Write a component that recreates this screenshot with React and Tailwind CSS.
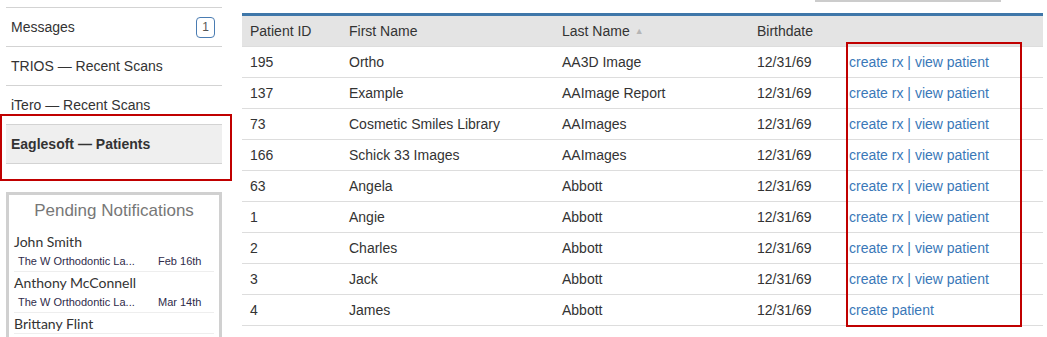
import React from "react";

const navItems = [
  { label: "Messages", badge: 1 },
  { label: "TRIOS — Recent Scans" },
  { label: "iTero — Recent Scans" },
  { label: "Eaglesoft — Patients", active: true },
];

const notifications = [
  { name: "John Smith", lab: "The W Orthodontic La...", date: "Feb 16th" },
  { name: "Anthony McConnell", lab: "The W Orthodontic La...", date: "Mar 14th" },
  { name: "Brittany Flint" },
];

const patients = [
  { id: 195, first: "Ortho", last: "AA3D Image", linked: true },
  { id: 137, first: "Example", last: "AAImage Report", linked: true },
  { id: 73, first: "Cosmetic Smiles Library", last: "AAImages", linked: true },
  { id: 166, first: "Schick 33 Images", last: "AAImages", linked: true },
  { id: 63, first: "Angela", last: "Abbott", linked: true },
  { id: 1, first: "Angie", last: "Abbott", linked: true },
  { id: 2, first: "Charles", last: "Abbott", linked: true },
  { id: 3, first: "Jack", last: "Abbott", linked: true },
  { id: 4, first: "James", last: "Abbott", linked: false },
];

const App = () => {
  return (
    <div
      className="relative w-[1047px] h-[337px] overflow-hidden bg-white text-[#333] text-[14px]"
      style={{ fontFamily: '"Liberation Sans", Arial, sans-serif' }}
    >
      <div className="flex pl-[6px] pr-[4px]">
        {/* Sidebar */}
        <div className="w-[216px] shrink-0 pt-[7px]">
          <div className="border-t border-[#d3d3d3]">
            {navItems.map((item) => (
              <div
                key={item.label}
                className={`h-[39px] flex items-center justify-between pl-[5px] pr-[7px] border-b border-[#d3d3d3] ${
                  item.active ? "bg-[#efefef] font-bold" : ""
                }`}
              >
                <span>{item.label}</span>
                {item.badge && (
                  <span className="w-[19px] h-[21px] flex items-center justify-center border border-[#4a7cb2] rounded-[4px] text-[12px] text-[#555]">
                    {item.badge}
                  </span>
                )}
              </div>
            ))}
          </div>

          {/* Pending notifications */}
          <div className="mt-[28px] border-[3px] border-[#d0d0d0] px-[5px] h-[160px]">
            <div className="h-[30px] flex items-center justify-center text-[17px] text-[#777] leading-none">
              Pending Notifications
            </div>
            <div className="pt-[6px]">
              {notifications.map((n) => (
                <div key={n.name} className="border-b border-[#eeeeee]">
                  <div
                    className="h-[20px] flex items-center text-[14px] text-[#333]"
                    style={{ fontFamily: "Lato, sans-serif" }}
                  >
                    {n.name}
                  </div>
                  {n.lab && (
                    <div className="h-[20px] flex items-center text-[11px] text-[#2f2b4a] pl-[4px]">
                      <span className="w-[140px]">{n.lab}</span>
                      <span>{n.date}</span>
                    </div>
                  )}
                </div>
              ))}
            </div>
          </div>
        </div>

        {/* Main table */}
        <div className="flex-1 ml-[20px]">
          <div className="h-[13px] flex justify-end pr-[42px]">
            <div className="w-[186px] h-[2px] bg-[#cccccc]" />
          </div>
          <div className="border-t-[3px] border-[#3f77a9]">
            <div className="h-[31px] flex items-center bg-[#e4e4e4] border-b border-[#dddddd] pt-[1px]">
              <div className="w-[107px] pl-[8px]">Patient ID</div>
              <div className="w-[213px]">First Name</div>
              <div className="w-[195px] flex items-center gap-[5px]">
                Last Name
                <span className="text-[9px] text-[#b5b5b5]">▲</span>
              </div>
              <div className="w-[92px]">Birthdate</div>
            </div>
            {patients.map((p) => (
              <div
                key={p.id}
                className="h-[31px] flex items-center border-b border-[#dddddd]"
              >
                <div className="w-[107px] pl-[8px]">{p.id}</div>
                <div className="w-[213px]">{p.first}</div>
                <div className="w-[195px]">{p.last}</div>
                <div className="w-[92px]">12/31/69</div>
                <div className="text-[#3a78b8]">
                  {p.linked ? "create rx | view patient" : "create patient"}
                </div>
              </div>
            ))}
          </div>
        </div>
      </div>

      {/* Annotation boxes */}
      <div className="absolute left-0 top-[114px] w-[232px] h-[67px] border-2 border-[#c00000]" />
      <div className="absolute left-[846px] top-[42px] w-[176px] h-[285px] border-2 border-[#c00000]" />
    </div>
  );
};

export default App;
